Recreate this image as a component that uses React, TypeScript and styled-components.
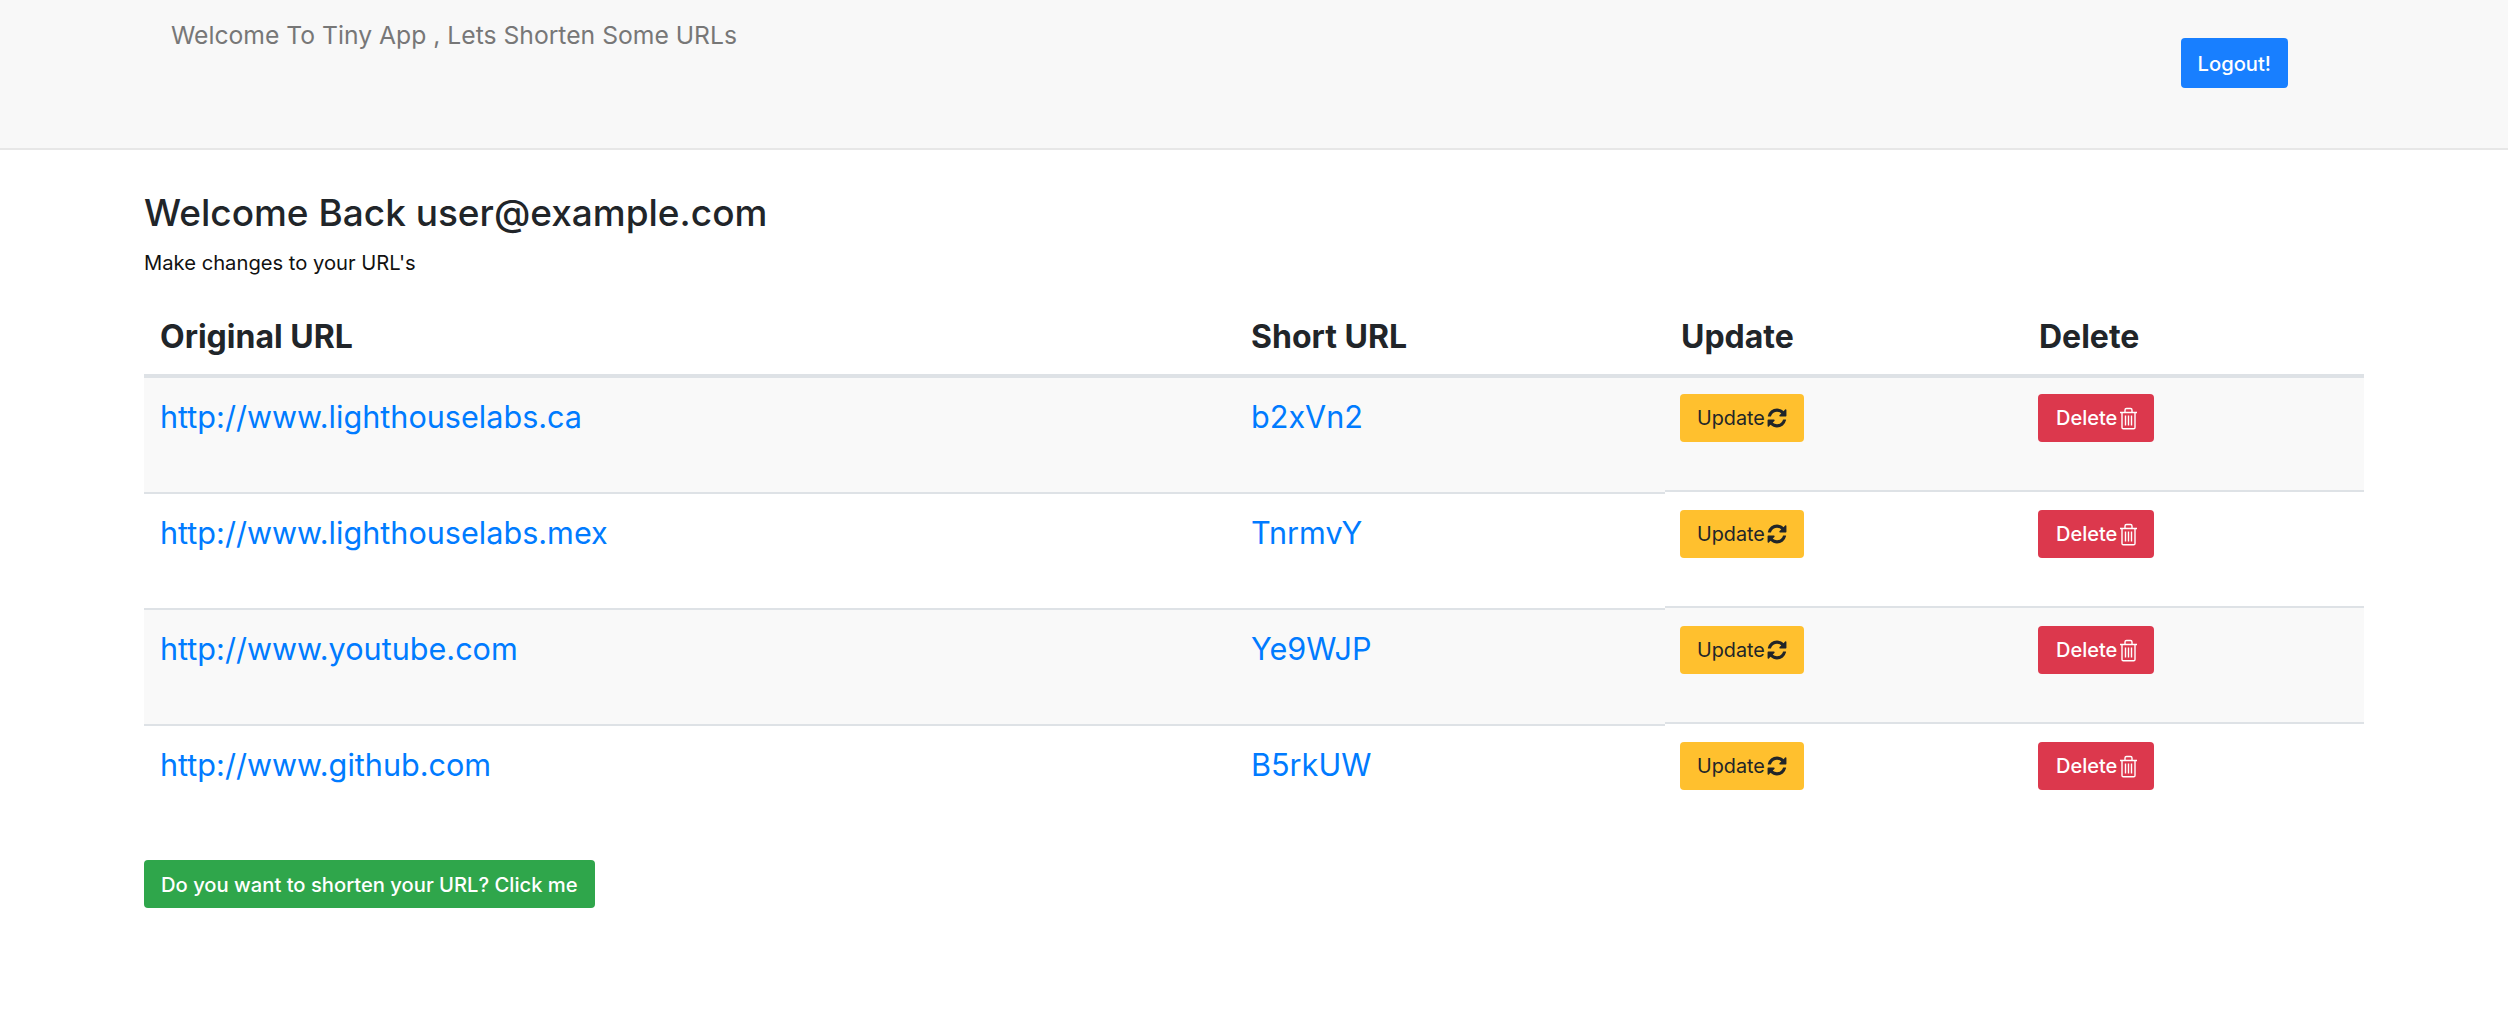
import { createGlobalStyle } from "styled-components"
import styled from "styled-components"

const GlobalStyle = createGlobalStyle`
  html, body {
    margin: 0;
    padding: 0;
    background: #fff;
    font-family: Inter, "Liberation Sans", sans-serif;
    color: #212529;
  }
`

const Navbar = styled.nav`
  height: 148px;
  background: #f8f8f8;
  border-bottom: 2px solid #e7e7e7;
  display: flex;
  align-items: flex-start;
  justify-content: space-between;
  padding: 0 220px 0 171px;
`

const Brand = styled.div`
  font-size: 24.7px;
  line-height: 36px;
  margin-top: 17px;
  color: #777;
`

const Button = styled.button<{ $bg: string; $fg?: string }>`
  display: inline-flex;
  align-items: center;
  height: 48px;
  padding: 0 17px;
  border: 0;
  border-radius: 4px;
  background: ${(p) => p.$bg};
  color: ${(p) => p.$fg || "#fff"};
  font-family: inherit;
  font-size: 20.2px;
  font-weight: 500;
`

const UpdateButton = styled(Button)`
  padding: 0 16px 0 17px;
  font-size: 19.8px;
  font-weight: 400;
`

const DeleteButton = styled(Button)`
  padding: 0 17px 0 18px;
  font-size: 20px;
`

const LogoutButton = styled(Button)`
  margin-top: 38px;
  height: 50px;
`

const Main = styled.main`
  padding: 40px 144px 0;
  width: 2220px;
`

const Title = styled.h2`
  margin: 0;
  font-size: 37px;
  line-height: 46px;
  font-weight: 500;
`

const Subtitle = styled.p`
  margin: 12px 0 0;
  font-size: 20.2px;
  line-height: 30px;
  color: #111;
`

const Table = styled.table`
  width: 100%;
  margin-top: 23px;
  border-collapse: separate;
  border-spacing: 0;
  table-layout: fixed;
`

const HeadCell = styled.th<{ $width: number }>`
  box-sizing: border-box;
  width: ${(p) => p.$width}px;
  height: 77px;
  padding: 0 16px 3px;
  text-align: left;
  font-size: 32px;
  font-weight: 700;
  border-bottom: 4px solid #dee2e6;
`

const Row = styled.tr<{ $striped: boolean }>`
  background: ${(p) => (p.$striped ? "#f9f9f9" : "#fff")};
`

const Cell = styled.td<{ $raised?: boolean }>`
  height: 116px;
  padding: 16px ${(p) => (p.$raised ? "15px" : "16px")};
  box-sizing: border-box;
  vertical-align: top;
  border-top: 2px solid ${(p) => (p.$raised ? "transparent" : "#dee2e6")};
  background-clip: padding-box;
  box-shadow: ${(p) => (p.$raised ? "0 -2px 0 #dee2e6" : "none")};
  tr:first-child > & {
    height: 114px;
    border-top: 0;
    box-shadow: none;
  }
`

const UrlLink = styled.a`
  display: block;
  font-size: 30.6px;
  line-height: 46px;
  color: #007bff;
  text-decoration: none;
`

const SyncIcon = styled.svg`
  width: 22px;
  height: 22px;
  margin-left: 1px;
  fill: currentColor;
`

const TrashIcon = styled.svg`
  width: 17px;
  height: 23px;
  margin-left: 3px;
  fill: none;
  stroke: currentColor;
  stroke-width: 1.4;
`

const Footer = styled.div`
  margin-top: 20px;
`

const urls = [
  { long: "http://www.lighthouselabs.ca", short: "b2xVn2" },
  { long: "http://www.lighthouselabs.mex", short: "TnrmvY" },
  { long: "http://www.youtube.com", short: "Ye9WJP" },
  { long: "http://www.github.com", short: "B5rkUW" },
]

const App = () => (
  <>
    <GlobalStyle />
    <Navbar>
      <Brand>Welcome To Tiny App , Lets Shorten Some URLs</Brand>
      <LogoutButton $bg="#187fff">Logout!</LogoutButton>
    </Navbar>
    <Main>
      <Title>Welcome Back user@example.com</Title>
      <Subtitle>Make changes to your URL's</Subtitle>
      <Table>
        <thead>
          <tr>
            <HeadCell $width={1091}>Original URL</HeadCell>
            <HeadCell $width={430}>Short URL</HeadCell>
            <HeadCell $width={358}>Update</HeadCell>
            <HeadCell $width={341}>Delete</HeadCell>
          </tr>
        </thead>
        <tbody>
          {urls.map((u, i) => (
            <Row key={u.short} $striped={i % 2 === 0}>
              <Cell><UrlLink href="#">{u.long}</UrlLink></Cell>
              <Cell><UrlLink href="#">{u.short}</UrlLink></Cell>
              <Cell $raised>
                <UpdateButton $bg="#ffc02e" $fg="#212529">
                  Update
                  <SyncIcon viewBox="0 0 1792 1792">
                    <path d="M1639 1056q0 5-1 7-64 268-268 434.5t-478 166.5q-146 0-282.500-55t-243.500-157l-129 129q-19 19-45 19t-45-19-19-45v-448q0-26 19-45t45-19h448q26 0 45 19t19 45-19 45l-137 137q71 66 161 102t187 36q134 0 250-65t186-179q11-17 53-117 8-23 30-23h192q13 0 22.500 9.500t9.500 22.500zm25-800v448q0 26-19 45t-45 19h-448q-26 0-45-19t-19-45 19-45l138-138q-148-137-349-137-134 0-250 65t-186 179q-11 17-53 117-8 23-30 23h-199q-13 0-22.500-9.500t-9.500-22.500v-7q65-268 270-434.500t480-166.500q146 0 284 55.500t245 156.500l130-129q19-19 45-19t45 19 19 45z" />
                  </SyncIcon>
                </UpdateButton>
              </Cell>
              <Cell $raised>
                <DeleteButton $bg="#dc384d">
                  Delete
                  <TrashIcon viewBox="0 0 17 22">
                    <path d="M0 5h17M5 5V2.500a1.500 1.500 0 0 1 1.500-1.500h4a1.500 1.500 0 0 1 1.500 1.500V5" />
                    <path d="M2 5v15a1.300 1.300 0 0 0 1.300 1.300h10.400a1.300 1.300 0 0 0 1.300-1.300V5" />
                    <path d="M5.500 8v10M8.500 8v10M11.500 8v10" />
                  </TrashIcon>
                </DeleteButton>
              </Cell>
            </Row>
          ))}
        </tbody>
      </Table>
      <Footer>
        <Button $bg="#2fa64b">Do you want to shorten your URL? Click me</Button>
      </Footer>
    </Main>
  </>
)

export default App
